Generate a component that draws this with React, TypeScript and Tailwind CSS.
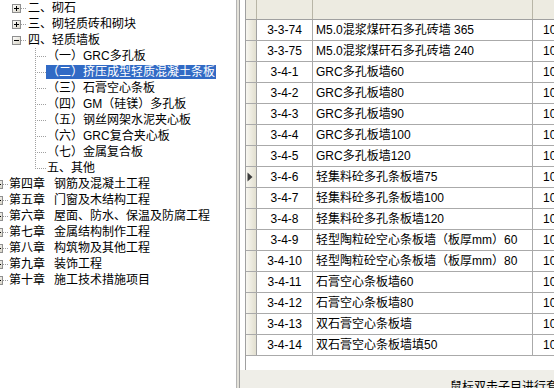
import React from "react";

type TreeNode = {
  level: 0 | 1 | 2;
  text: string;
  tail?: string;
  expander?: "plus" | "minus";
  last?: boolean;
  selected?: boolean;
};

const tree: TreeNode[] = [
  { level: 1, text: "二、砌石", expander: "plus" },
  { level: 1, text: "三、砌轻质砖和砌块", expander: "plus" },
  { level: 1, text: "四、轻质墙板", expander: "minus" },
  { level: 2, text: "（一）GRC多孔板" },
  { level: 2, text: "（二）挤压成型轻质混凝土条板", selected: true },
  { level: 2, text: "（三）石膏空心条板" },
  { level: 2, text: "（四）GM（硅镁）多孔板" },
  { level: 2, text: "（五）钢丝网架水泥夹心板" },
  { level: 2, text: "（六）GRC复合夹心板" },
  { level: 2, text: "（七）金属复合板" },
  { level: 2, text: "五、其他", last: true },
  { level: 0, text: "第四章", tail: "钢筋及混凝土工程", expander: "plus" },
  { level: 0, text: "第五章", tail: "门窗及木结构工程", expander: "plus" },
  { level: 0, text: "第六章", tail: "屋面、防水、保温及防腐工程", expander: "plus" },
  { level: 0, text: "第七章", tail: "金属结构制作工程", expander: "plus" },
  { level: 0, text: "第八章", tail: "构筑物及其他工程", expander: "plus" },
  { level: 0, text: "第九章", tail: "装饰工程", expander: "plus" },
  { level: 0, text: "第十章", tail: "施工技术措施项目", expander: "plus" },
];

const rows: [string, string][] = [
  ["3-3-74", "M5.0混浆煤矸石多孔砖墙 365"],
  ["3-3-75", "M5.0混浆煤矸石多孔砖墙 240"],
  ["3-4-1", "GRC多孔板墙60"],
  ["3-4-2", "GRC多孔板墙80"],
  ["3-4-3", "GRC多孔板墙90"],
  ["3-4-4", "GRC多孔板墙100"],
  ["3-4-5", "GRC多孔板墙120"],
  ["3-4-6", "轻集料砼多孔条板墙75"],
  ["3-4-7", "轻集料砼多孔条板墙100"],
  ["3-4-8", "轻集料砼多孔条板墙120"],
  ["3-4-9", "轻型陶粒砼空心条板墙（板厚mm）60"],
  ["3-4-10", "轻型陶粒砼空心条板墙（板厚mm）80"],
  ["3-4-11", "石膏空心条板墙60"],
  ["3-4-12", "石膏空心条板墙80"],
  ["3-4-13", "双石膏空心条板墙"],
  ["3-4-14", "双石膏空心条板墙填50"],
];

function Box({ x, sign }: { x: number; sign: "plus" | "minus" }) {
  // 9px expander box, x = left pixel
  return (
    <g>
      <defs>
        <linearGradient id="boxfill" x1="0" y1="0" x2="1" y2="1">
          <stop offset="0" stopColor="#ffffff" />
          <stop offset="1" stopColor="#d6d2c4" />
        </linearGradient>
      </defs>
      <rect x={x + 0.5} y={4.5} width={8} height={8} fill="url(#boxfill)" stroke="#8f8f8f" />
      <line x1={x + 2} y1={8.5} x2={x + 7} y2={8.5} stroke="#000" />
      {sign === "plus" && <line x1={x + 4.5} y1={6} x2={x + 4.5} y2={11} stroke="#000" />}
    </g>
  );
}

function Connector({ node }: { node: TreeNode }) {
  const dot = { stroke: "#a0a0a0", strokeDasharray: "1 1" };
  if (node.level === 0) {
    return (
      <svg width={8} height={16} className="shrink-0 overflow-visible">
        <line x1={3} y1={8.5} x2={8} y2={8.5} {...dot} />
        <Box x={-6} sign="plus" />
      </svg>
    );
  }
  if (node.level === 1) {
    return (
      <svg width={27} height={16} className="shrink-0">
        <line x1={21} y1={8.5} x2={27} y2={8.5} {...dot} />
        <Box x={12} sign={node.expander ?? "plus"} />
      </svg>
    );
  }
  return (
    <svg width={46} height={16} className="shrink-0">
      <line x1={35.5} y1={0} x2={35.5} y2={node.last ? 9 : 16} {...dot} />
      <line x1={37} y1={8.5} x2={46} y2={8.5} {...dot} />
    </svg>
  );
}

function TreeRow({ node }: { node: TreeNode }) {
  return (
    <div className="flex h-4 items-center whitespace-nowrap">
      <Connector node={node} />
      <span
        className={
          node.selected
            ? "h-[14px] bg-[#316ac5] px-px leading-[14px] text-white"
            : "px-px leading-4 text-black"
        }
      >
        {node.text}
        {node.tail && <span className="ml-[9px]">{node.tail}</span>}
      </span>
    </div>
  );
}

export default function App() {
  return (
    <div className="flex h-[388px] w-[554px] overflow-hidden bg-white font-['Liberation_Sans','Noto_Sans_CJK_SC',sans-serif] text-[12px]">
      {/* tree */}
      <div className="w-[236px] shrink-0 overflow-hidden bg-white">
        {tree.map((n, i) => (
          <TreeRow key={i} node={n} />
        ))}
      </div>

      {/* splitter */}
      <div className="w-[4px] shrink-0 border-x border-l-[#b4b4b4] border-r-[#a0a0a0] bg-[#e4e2da]" />

      {/* right side */}
      <div className="flex min-w-0 flex-1 flex-col">
        <div className="h-[370px] shrink-0 bg-white pl-[5px]">
          <div className="h-full overflow-hidden border-l border-[#a0a0a0]">
            {/* header */}
            <div className="flex h-[20px] border-b border-[#a0a0a0] bg-[#edebe1]">
              <div className="w-[11px] shrink-0 border-r border-[#b8b5a6]" />
              <div className="w-[56px] shrink-0 border-r border-[#b8b5a6]" />
              <div className="w-[220px] shrink-0 border-r border-[#b8b5a6]" />
              <div className="flex-1" />
            </div>
            {rows.map(([code, desc], i) => (
              <div key={code} className="flex h-[21px] border-b border-[#aaaaaa] leading-[20px]">
                <div className="relative flex w-[11px] shrink-0 items-center border-r border-[#a0a0a0] bg-gradient-to-r from-[#f8f7f1] to-[#e2dfcf] pl-px">
                  {i === 7 && (
                    <svg width={6} height={10}>
                      <polygon points="0.5,0.5 5.5,5 0.5,9.5" fill="#3c3c3c" />
                    </svg>
                  )}
                </div>
                <div className="w-[56px] shrink-0 border-r border-[#aaaaaa] text-center text-black">{code}</div>
                <div className="w-[220px] shrink-0 overflow-hidden whitespace-nowrap border-r border-[#aaaaaa] pl-[3px] text-black">
                  {desc}
                </div>
                <div className="flex-1 whitespace-nowrap pl-[10px] text-black">10m²</div>
              </div>
            ))}
          </div>
        </div>
        <div className="flex-1 overflow-hidden whitespace-nowrap bg-[#efeee8] pl-[210px] pt-[11px] leading-[12px] text-black">
          鼠标双击子目进行套用定额
        </div>
      </div>
    </div>
  );
}
